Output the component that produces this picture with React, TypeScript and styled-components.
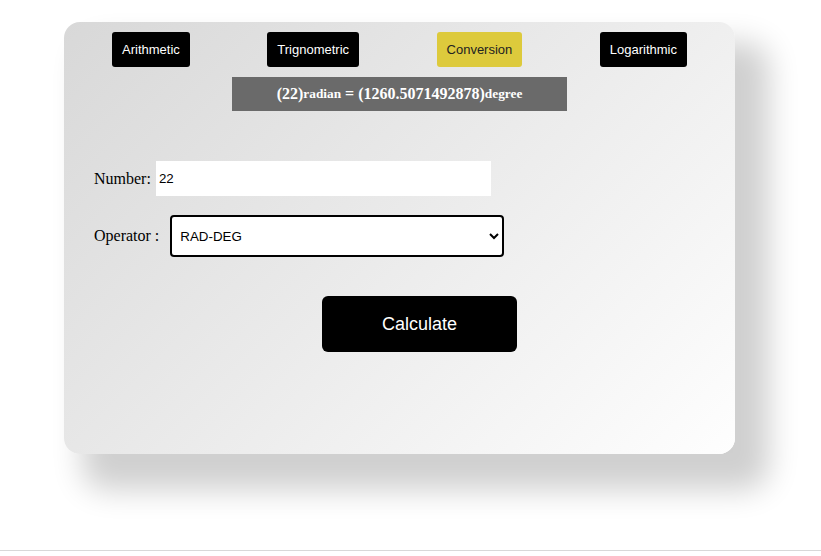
import React, { useState } from 'react';
import styled, { createGlobalStyle } from 'styled-components';

const GlobalStyle = createGlobalStyle`
  html, body {
    margin: 0;
    padding: 0;
    background: #fff;
    font-family: "Liberation Serif", "Times New Roman", serif;
  }
`;

const tabs = ['Arithmetic', 'Trignometric', 'Conversion', 'Logarithmic'];

function App() {
  const [active, setActive] = useState('Conversion');
  const [num, setNum] = useState('22');
  const [op, setOp] = useState('RAD-DEG');

  return (
    <Page>
      <GlobalStyle />
      <Card>
        <TabRow>
          {tabs.map((t) => (
            <Tab key={t} $active={t === active} onClick={() => setActive(t)}>
              {t}
            </Tab>
          ))}
        </TabRow>
        <Result>
          (22)<sub>radian</sub>&nbsp;= (1260.5071492878)<sub>degree</sub>
        </Result>
        <Form onSubmit={(e) => e.preventDefault()}>
          <Row>
            <Label>Number:</Label>
            <NumberInput type="text" value={num} onChange={(e) => setNum(e.target.value)} />
          </Row>
          <Row $gap={11}>
            <Label>Operator :</Label>
            <Select value={op} onChange={(e) => setOp(e.target.value)}>
              <option>RAD-DEG</option>
              <option>DEG-RAD</option>
            </Select>
          </Row>
          <CalcButton type="submit">Calculate</CalcButton>
        </Form>
      </Card>
    </Page>
  );
}

const Page = styled.div`
  box-sizing: border-box;
  height: 551px;
  padding: 22px 0 0 64px;
  border-bottom: 1px solid #d8d8d8;
`;

const Card = styled.div`
  box-sizing: border-box;
  width: 671px;
  height: 432px;
  padding-top: 10px;
  border-radius: 16px;
  background: linear-gradient(135deg, #d8d8d8 0%, #fefefe 100%);
  box-shadow: 26px 28px 30px 8px rgba(0, 0, 0, 0.19);
`;

const TabRow = styled.div`
  display: flex;
  justify-content: space-between;
  padding: 0 48px;
`;

const Tab = styled.button<{ $active?: boolean }>`
  height: 35px;
  padding: 0 10px;
  border: none;
  border-radius: 3px;
  background: ${(p) => (p.$active ? '#ddca3c' : '#000')};
  color: ${(p) => (p.$active ? '#222' : '#fff')};
  font-family: "Liberation Sans", Arial, sans-serif;
  font-size: 13px;
  cursor: pointer;
`;

const Result = styled.div`
  width: 335px;
  height: 34px;
  margin: 10px auto 0;
  display: flex;
  align-items: center;
  justify-content: center;
  background: #6a6a6a;
  color: #fff;
  font-family: "Liberation Serif", "Times New Roman", serif;
  font-weight: bold;
  font-size: 16px;
  line-height: 18px;
  white-space: pre;

  sub {
    font-size: 13.33px;
    vertical-align: -6px;
    line-height: 1;
  }
`;

const Form = styled.form`
  display: flex;
  flex-direction: column;
  align-items: flex-start;
  padding: 50px 0 0 30px;
`;

const Row = styled.div<{ $gap?: number }>`
  display: flex;
  align-items: center;
  gap: ${(p) => p.$gap ?? 5}px;
  margin-bottom: 19px;
`;

const Label = styled.label`
  font-family: "Liberation Serif", "Times New Roman", serif;
  font-size: 16px;
  color: #000;
`;

const NumberInput = styled.input`
  box-sizing: border-box;
  width: 335px;
  height: 35px;
  padding: 0 3px;
  border: none;
  outline: none;
  background: #fff;
  font-family: "Liberation Sans", Arial, sans-serif;
  font-size: 13.33px;
  color: #000;
`;

const Select = styled.select`
  box-sizing: border-box;
  width: 334px;
  height: 42px;
  padding: 0 4px;
  border: 2px solid #000;
  border-radius: 4px;
  background: #fff;
  font-family: "Liberation Sans", Arial, sans-serif;
  font-size: 13.33px;
  color: #000;
`;

const CalcButton = styled.button`
  width: 195px;
  height: 56px;
  margin: 20px 0 0 228px;
  border: none;
  border-radius: 6px;
  background: #000;
  color: #fff;
  font-family: "Liberation Sans", Arial, sans-serif;
  font-size: 18px;
  cursor: pointer;
`;

export default App;
